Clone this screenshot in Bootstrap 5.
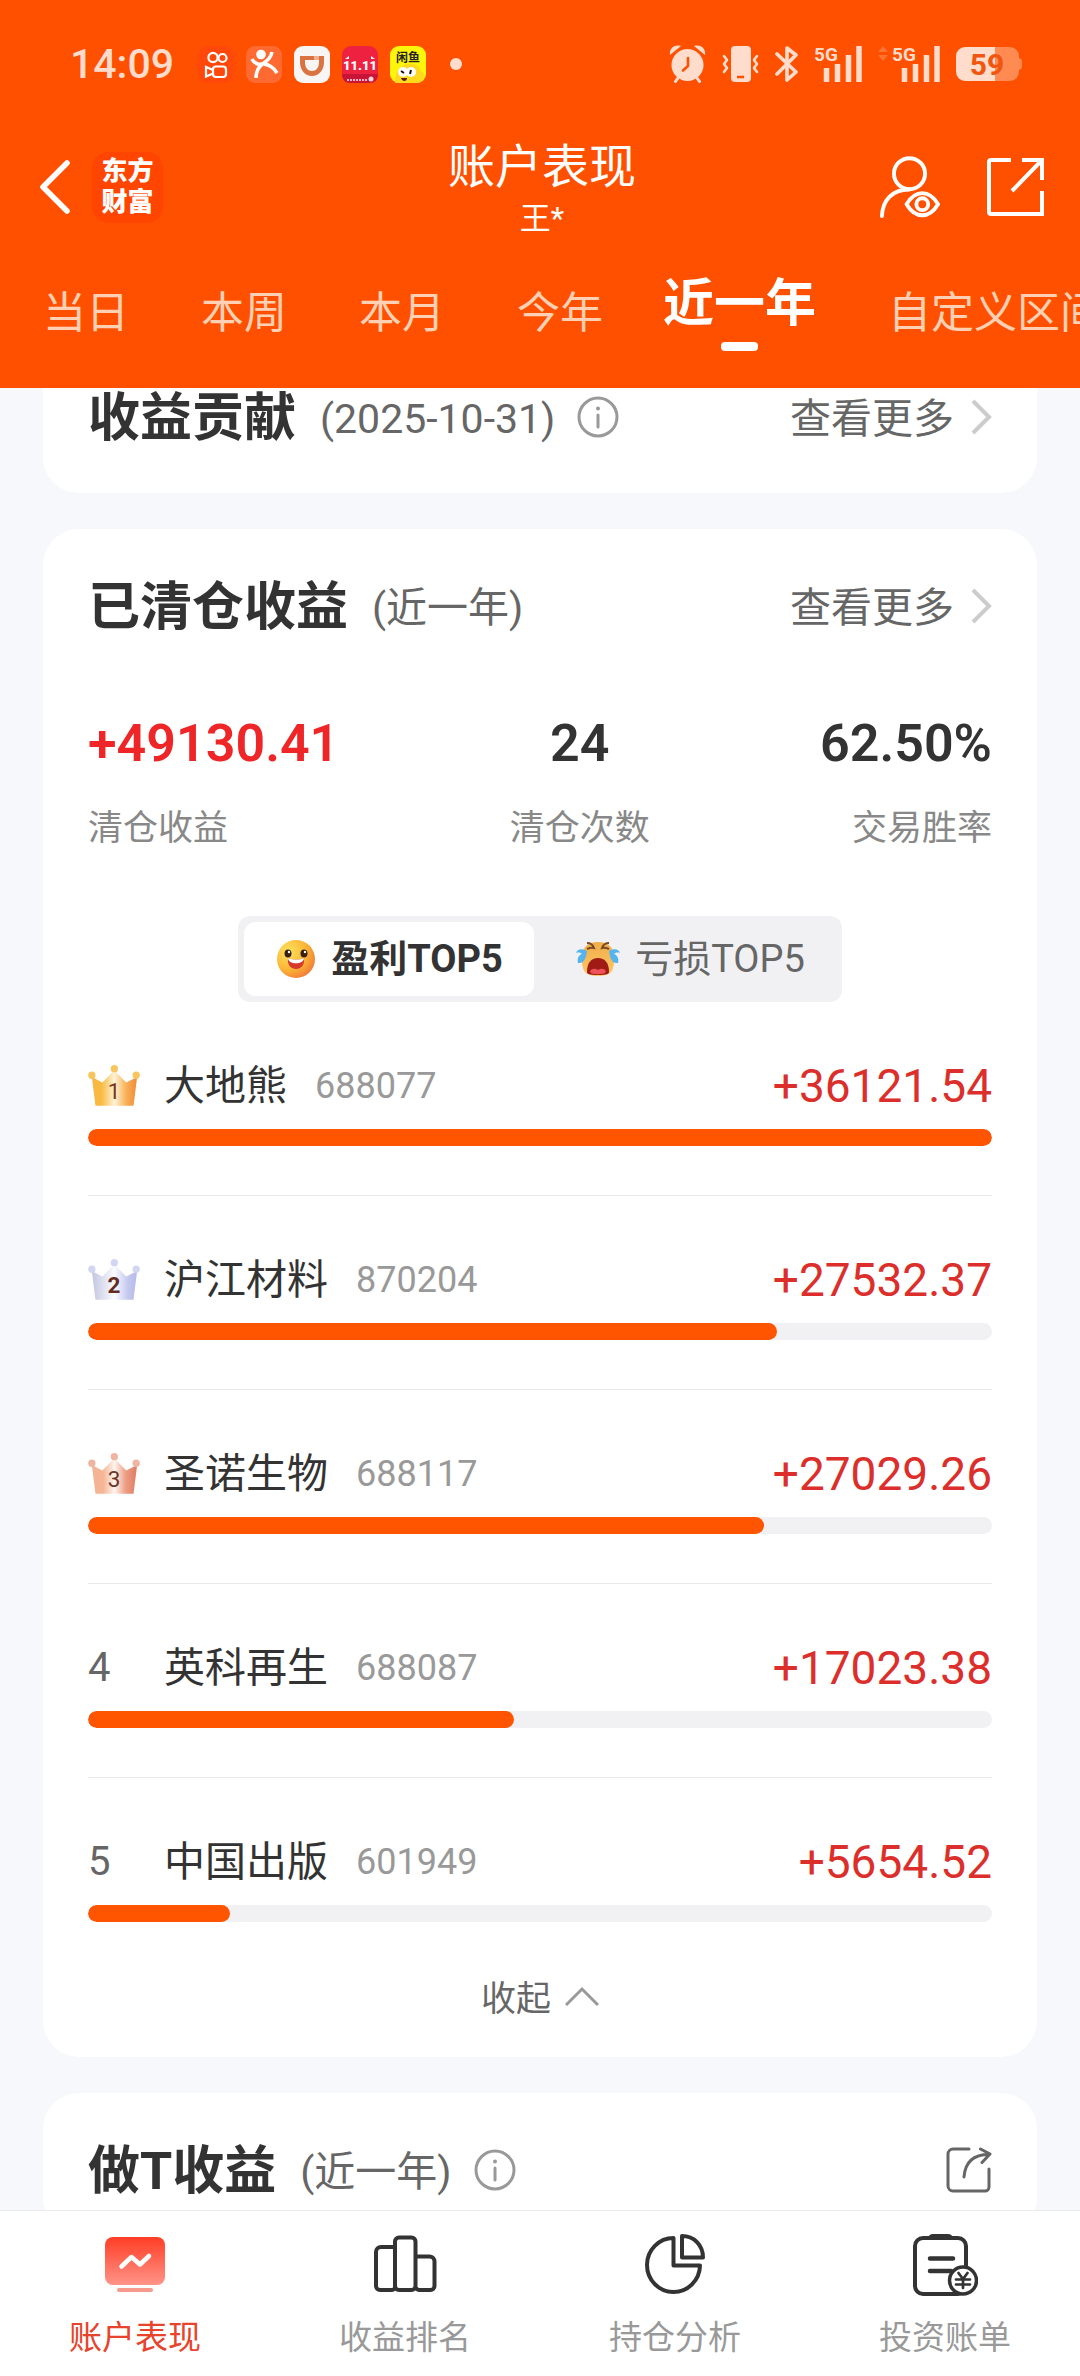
<!DOCTYPE html>
<html lang="zh-CN">
<head>
<meta charset="utf-8">
<meta name="viewport" content="width=device-width, initial-scale=1">
<title>账户表现</title>
<link href="https://cdn.jsdelivr.net/npm/bootstrap@5.3.0/dist/css/bootstrap.min.css" rel="stylesheet">
<style>
  :root { --brand: #ff5000; --pale: #ffdccc; --ink: #333; --rise: #dc2f2c; }
  body { font-family: Roboto, "Noto Sans CJK SC", sans-serif; background: #f7f8fb; color: var(--ink); font-size: 40px; }
  svg { display: block; flex: none; }
  a { color: inherit; text-decoration: none; }
  .btn { --bs-btn-font-size: inherit; --bs-btn-color: inherit; --bs-btn-line-height: inherit; }

  .app-head { background: var(--brand); color: #fff; }
  .status { padding: 42px 58px 0 70px; height: 86px; color: var(--pale); }
  .clock { font-size: 41px; font-weight: 500; line-height: 40px; margin-right: 24px; }
  .apps { gap: 12px; }
  .signals { gap: 16px; }
  .titlebar { margin-top: 52px; padding: 0 36px 0 40px; }
  .side { height: 98px; }
  .brand-box { width: 71px; height: 71px; border-radius: 16px; background: #ff4500; font-size: 26px; line-height: 31px; font-weight: 900; margin-left: 22px; }
  .page-title { font-size: 47px; line-height: 58px; font-weight: 400; }
  .page-sub { font-size: 31px; line-height: 46px; }
  .tools { gap: 46px; }

  .periods { gap: 72px; padding: 33px 0 37px 43px; overflow: hidden; }
  .periods .nav-link { padding: 0; font-size: 43px; line-height: 58px; color: #ffd0b3; white-space: nowrap; }
  .periods .nav-link.active { color: #fff; font-size: 51px; font-weight: 700; margin-left: -12px; }
  .periods .active::after { content: ""; display: block; width: 37px; height: 9px; border-radius: 4px; background: #fff; margin: 9px auto 0; }

  .feed { padding: 0 43px; gap: 36px; min-height: 0; overflow: hidden; }
  .panel { background: #fff; border-radius: 36px; padding: 49px 45px 32px; flex: none; }
  .panel-cut { padding-top: 1px; padding-bottom: 44px; border-top-left-radius: 0; border-top-right-radius: 0; }
  .panel-title { font-size: 52px; line-height: 60px; font-weight: 700; }
  .soft { color: #666; font-size: 41px; line-height: 60px; }
  .period-note { margin-left: 24px; }
  .info { margin-left: 22px; }
  .more { gap: 16px; }
  .info, .more svg, .share-small { margin-bottom: 4px; }

  .figures { margin-top: 76px; }
  .figure-num { font-size: 52px; line-height: 60px; font-weight: 600; }
  .figure-label { font-size: 35px; line-height: 50px; margin-top: 30px; color: #888; }
  .figure-rise { color: #ee2627; }

  .switch { margin: 62px auto 0; padding: 6px; border-radius: 12px; background: #f1f1f4; width: max-content; }
  .switch .btn { height: 74px; width: 290px; border: 0; border-radius: 12px; font-size: 38px; line-height: 60px; padding: 0; color: #666; gap: 14px; }
  .switch .btn + .btn { width: 302px; padding-left: 10px; }
  .switch .btn.active { background: #fff; color: var(--ink); font-weight: 700; }

  .rank-list li { padding: 54px 0 49px; border-bottom: 1px solid #e9e9eb; }
  .rank-list li:last-child { border-bottom: 0; }
  .rank-line { line-height: 60px; }
  .rank-no { width: 76px; color: #666; font-size: 40px; }
  .rank-no svg { margin-bottom: 2px; }
  .rank-name { font-size: 41px; }
  .rank-code { font-size: 36px; color: #999; margin-left: 28px; }
  .rank-gain { font-size: 46px; color: var(--rise); }
  .progress { --bs-progress-height: 17px; --bs-progress-bg: #f1f1f4; --bs-progress-border-radius: 9px; --bs-progress-bar-bg: #ff5500; margin-top: 13px; }
  .progress-bar { border-radius: 9px; }
  .fold { font-size: 35px; line-height: 50px; color: #666; gap: 14px; margin-top: 4px; }
  .fold svg { margin-bottom: 8px; }

  .dock { background: #fff; border-top: 1px solid #e9eaec; padding: 23px 0 18px; }
  .dock a { font-size: 33px; line-height: 40px; color: #999; gap: 22px; }
  .dock a.active { color: #e8432c; }
</style>
</head>
<body class="vh-100 overflow-hidden d-flex flex-column">

<header class="app-head flex-shrink-0">
  <div class="status d-flex align-items-center justify-content-between">
    <div class="d-flex align-items-center">
      <span class="clock">14:09</span>
      <div class="apps d-flex align-items-center">
        <svg width="36" height="37" viewBox="0 0 36 37"><rect width="36" height="37" rx="9" fill="#ff480a"/><g fill="none" stroke="#fff" stroke-width="2.2"><circle cx="15" cy="11.500" r="4.600"/><circle cx="24.500" cy="12" r="4"/><rect x="15" y="20.500" width="13" height="10.500" rx="3"/><path d="M15 24 8 21v9.500l7-3"/></g></svg>
        <svg width="36" height="37" viewBox="0 0 36 37"><rect width="36" height="37" rx="9" fill="#ff6a33"/><circle cx="15" cy="8.500" r="4.800" fill="#fff"/><path d="M6 13c3 6 9 6 12 4s7-6 8-11M18 17c-5 3-8 8-8 15M18 18c7 1 10 4 13 9" fill="none" stroke="#fff" stroke-width="3.600"/></svg>
        <svg width="36" height="37" viewBox="0 0 36 37"><rect width="36" height="37" rx="9" fill="#f8f6f4"/><path d="M6 10h24v6c0 8-5 14-12 14S6 24 6 16zM11 14v2c0 6 3 9 7 9s7-3 7-9v-2z" fill="#db7242" fill-rule="evenodd"/><path d="M20 10h5v4h-5z" fill="#f0b090"/></svg>
        <svg width="36" height="37" viewBox="0 0 36 37"><rect width="36" height="37" rx="9" fill="#ee2140"/><path d="M0 28h36c0 6-3 9-9 9H9c-6 0-9-3-9-9z" fill="#c9143a"/><text x="18" y="24" text-anchor="middle" font-family="Roboto, sans-serif" font-size="13" font-weight="900" fill="#fff">11.11</text><path d="M3 13l4-3v3zM29 10l4 3h-4z" fill="#fff"/><path d="M5 34h20" stroke="#ffb3bf" stroke-width="2" stroke-dasharray="2 1"/><circle cx="29" cy="33" r="2.500" fill="#ffd5dc"/></svg>
        <svg width="36" height="37" viewBox="0 0 36 37"><rect width="36" height="37" rx="9" fill="#fdf50a"/><path d="M5 37c0-15 8-20 17-19l4 1 3 2 2 4 3 3-1 5c-2 3-4 4-7 4z" fill="#ffd91d"/><ellipse cx="13" cy="26" rx="5" ry="5" fill="#fff"/><ellipse cx="21" cy="26" rx="5" ry="5" fill="#fff"/><path d="m11 25 3 2M21 24l-1 4" stroke="#111" stroke-width="2"/><path d="M11 32h6c0 4-5 4-6 0z" fill="#521"/><text x="18" y="16" text-anchor="middle" font-family="'Noto Sans CJK SC', sans-serif" font-size="12" font-weight="700" fill="#222">闲鱼</text></svg>
      </div>
      <svg class="ms-4" width="12" height="12" viewBox="0 0 12 12"><circle cx="6" cy="6" r="6" fill="currentColor"/></svg>
    </div>
    <div class="signals d-flex align-items-center">
      <svg width="37" height="38" viewBox="0 0 37 38"><circle cx="18.500" cy="20" r="16" fill="currentColor"/><path d="M1 10C0 4 5-1 12 1zM36 10C37 4 32-1 25 1z" fill="currentColor"/><path d="m9 33-2.500 3.500M28 33l2.500 3.500" stroke="currentColor" stroke-width="3" stroke-linecap="round"/><path d="M19 13v8l-5 4.500" fill="none" stroke="#ff5000" stroke-width="2.600" stroke-linecap="round"/></svg>
      <svg width="37" height="36" viewBox="0 0 37 36"><rect x="9" width="20" height="36" rx="4" fill="currentColor"/><path d="M15 31h7" stroke="#ff5000" stroke-width="2.500"/><path d="m2 10 3 4-3 4 3 4-3 4M35 10l-3 4 3 4-3 4 3 4" fill="none" stroke="currentColor" stroke-width="2.600" stroke-linecap="round" stroke-linejoin="round"/></svg>
      <svg width="23" height="38" viewBox="0 0 23 38"><path d="m2 9 19 18-9 8V3l9 7L2 29" fill="none" stroke="currentColor" stroke-width="3.600" stroke-linejoin="round" stroke-linecap="round"/></svg>
      <svg width="48" height="48" viewBox="0 -5 48 48"><text x="0" y="15.500" font-family="Roboto, sans-serif" font-size="19" font-weight="700" fill="currentColor">5G</text><path d="M12.500 37V23M23.500 37V19M34.500 37V10M45 37V1" stroke="currentColor" stroke-width="5.500"/></svg>
      <svg width="62" height="48" viewBox="0 -5 62 48"><path d="M5 1l5 6H0zM5 16l5-6H0z" fill="#ff7433"/><text x="14" y="15.500" font-family="Roboto, sans-serif" font-size="19" font-weight="700" fill="currentColor">5G</text><path d="M26.500 37V23M37.500 37V19M48.500 37V10M59 37V1" stroke="currentColor" stroke-width="5.500"/></svg>
      <svg width="66" height="34" viewBox="0 0 66 34"><path d="M39 0h15a9 9 0 0 1 9 9v2c3 1 3 2 3 6s0 5-3 6v2a9 9 0 0 1-9 9H39z" fill="#ff8a52"/><path d="M39 0H9a9 9 0 0 0-9 9v16a9 9 0 0 0 9 9h30z" fill="currentColor"/><text x="31" y="28" text-anchor="middle" font-family="Roboto, sans-serif" font-size="30" font-weight="700" fill="#f0560f">59</text></svg>
    </div>
  </div>

  <div class="titlebar d-flex align-items-start">
    <div class="side d-flex align-items-center col">
      <button type="button" class="btn p-0 border-0" aria-label="返回"><svg width="30" height="54" viewBox="0 0 30 54"><path d="M27 3 3 27l24 24" fill="none" stroke="#fff" stroke-width="5.500" stroke-linecap="round" stroke-linejoin="round"/></svg></button>
      <div class="brand-box d-flex flex-column justify-content-center text-center"><span>东方</span><span>财富</span></div>
    </div>
    <div class="text-center">
      <h1 class="page-title m-0">账户表现</h1>
      <div class="page-sub">王*</div>
    </div>
    <div class="side tools d-flex align-items-center justify-content-end col">
      <button type="button" class="btn p-0 border-0" aria-label="隐藏账户"><svg width="62" height="62" viewBox="0 0 62 63"><g fill="none" stroke="#fff" stroke-width="4"><circle cx="30.500" cy="18" r="15.800"/><path d="M2.500 61C3 45 13 34 30 34" stroke-linecap="round"/><path d="M27.500 49c9-15 23-15 32 0-9 15-23 15-32 0z" stroke-linejoin="round"/><circle cx="43.500" cy="49" r="6"/></g></svg></button>
      <button type="button" class="btn p-0 border-0" aria-label="分享"><svg width="57" height="58" viewBox="0 0 57 58"><path d="M24 2H4a2 2 0 0 0-2 2V54a2 2 0 0 0 2 2h51V33M35 2h20V22M54 3 25 33" fill="none" stroke="#fff" stroke-width="4"/></svg></button>
    </div>
  </div>

  <nav class="periods nav flex-nowrap align-items-center">
    <a class="nav-link" href="#">当日</a>
    <a class="nav-link" href="#">本周</a>
    <a class="nav-link" href="#">本月</a>
    <a class="nav-link" href="#">今年</a>
    <a class="nav-link active" href="#" aria-current="true">近一年</a>
    <a class="nav-link" href="#">自定义区间</a>
  </nav>
</header>

<main class="feed d-flex flex-column flex-grow-1">
  <section class="panel panel-cut">
    <div class="d-flex align-items-center">
      <h2 class="panel-title m-0">收益贡献</h2>
      <span class="soft period-note">(2025-10-31)</span>
      <svg class="info" width="42" height="42" viewBox="0 0 42 42"><g fill="none" stroke="#999" stroke-width="3"><circle cx="21" cy="21" r="19"/><path d="M21 19v12" stroke-linecap="round"/></g><circle cx="21" cy="12.500" r="2" fill="#999"/></svg>
      <a class="soft more d-flex align-items-center ms-auto" href="#">查看更多<svg width="22" height="36" viewBox="0 0 22 36"><path d="m3 2 16 16L3 34" fill="none" stroke="#ccc" stroke-width="4"/></svg></a>
    </div>
  </section>

  <section class="panel">
    <div class="d-flex align-items-center">
      <h2 class="panel-title m-0">已清仓收益</h2>
      <span class="soft period-note">(近一年)</span>
      <a class="soft more d-flex align-items-center ms-auto" href="#">查看更多<svg width="22" height="36" viewBox="0 0 22 36"><path d="m3 2 16 16L3 34" fill="none" stroke="#ccc" stroke-width="4"/></svg></a>
    </div>

    <div class="figures d-flex justify-content-between">
      <div><div class="figure-num figure-rise">+49130.41</div><div class="figure-label">清仓收益</div></div>
      <div class="text-center"><div class="figure-num">24</div><div class="figure-label">清仓次数</div></div>
      <div class="text-end"><div class="figure-num">62.50%</div><div class="figure-label">交易胜率</div></div>
    </div>

    <div class="switch d-flex">
      <button type="button" class="btn active d-flex align-items-center justify-content-center" aria-pressed="true">
        <svg width="42" height="42" viewBox="0 0 42 42"><defs><radialGradient id="face" cx=".3" cy=".3" r=".8"><stop offset="0" stop-color="#ffe25c"/><stop offset=".6" stop-color="#fbb534"/><stop offset="1" stop-color="#f0783a"/></radialGradient></defs><circle cx="21" cy="21" r="19" fill="url(#face)"/><ellipse cx="13" cy="15.500" rx="3.500" ry="4" fill="#3a2012"/><ellipse cx="29" cy="15.500" rx="3.500" ry="4" fill="#3a2012"/><circle cx="14" cy="14" r="1.200" fill="#fff"/><circle cx="30" cy="14" r="1.200" fill="#fff"/><path d="M13 20c5 2 12 2 16 0 1 7-3 11-8 11s-9-4-8-11z" fill="#d8392d"/><path d="M13 20c5 2 12 2 16 0 0 7-16 7-16 0z" fill="#fff"/></svg>
        盈利TOP5
      </button>
      <button type="button" class="btn d-flex align-items-center justify-content-center" aria-pressed="false">
        <svg width="46" height="42" viewBox="0 0 46 42"><defs><linearGradient id="sob" x2="0" y2="1"><stop offset="0" stop-color="#f0ae4a"/><stop offset="1" stop-color="#ffc766"/></linearGradient></defs><path d="M7 20C7 9 13 4 23 4s16 5 16 16-1 18-16 18S7 31 7 20z" fill="url(#sob)"/><path d="M12 34c0-9 4-14 11-14s11 5 11 14c0 2-2 3-11 3s-11-1-11-3z" fill="#a01a16"/><path d="M15 34c1-4 5-4 8-2 3-2 7-2 8 2-2 3-14 3-16 0z" fill="#f0525a"/><path d="M12 5c4 0 6 2 7 5-3-1-5 0-7 1M34 5c-4 0-6 2-7 5 3-1 5 0 7 1" fill="none" stroke="#7a4a25" stroke-width="2"/><path d="M12 13C7 10 2 11 1 15c3-1 5 0 6 1-4 1-5 6-4 9 6 1 8-5 9-12zM34 13c5-3 10-2 11 2-3-1-5 0-6 1 4 1 5 6 4 9-6 1-8-5-9-12z" fill="#55b4ee"/></svg>
        亏损TOP5
      </button>
    </div>

    <svg width="0" height="0" class="position-absolute" aria-hidden="true"><defs>
      <linearGradient id="gold"><stop offset="0" stop-color="#f8b640"/><stop offset=".22" stop-color="#f9bb45"/><stop offset=".5" stop-color="#fff3d6"/><stop offset=".75" stop-color="#f9b25a"/><stop offset="1" stop-color="#f08b36"/></linearGradient>
      <linearGradient id="silver"><stop offset="0" stop-color="#c3c6e0"/><stop offset=".5" stop-color="#fafaff"/><stop offset=".8" stop-color="#c4c8ee"/><stop offset="1" stop-color="#b4baea"/></linearGradient>
      <linearGradient id="bronze"><stop offset="0" stop-color="#f4b393"/><stop offset=".25" stop-color="#f5b596"/><stop offset=".5" stop-color="#fff4ee"/><stop offset=".75" stop-color="#ec9d82"/><stop offset="1" stop-color="#df7c61"/></linearGradient>
      <path id="crown" d="M11 36 22 123h115l11-87-33 17-36-37-36 37z"/>
      <g id="pearls"><circle cx="79" cy="11" r="11"/><circle cx="11" cy="31" r="11"/><circle cx="145" cy="31" r="11"/></g>
    </defs></svg>

    <ol class="rank-list list-unstyled m-0">
      <li>
        <div class="rank-line d-flex align-items-center">
          <span class="rank-no"><svg width="52" height="41" viewBox="0 0 156 124"><use href="#crown" fill="url(#gold)"/><use href="#pearls" fill="#f6c55e"/><text x="78" y="102" text-anchor="middle" font-family="Roboto, sans-serif" font-size="68" fill="#7a3518">1</text></svg></span>
          <span class="rank-name">大地熊</span><span class="rank-code">688077</span><span class="rank-gain ms-auto">+36121.54</span>
        </div>
        <div class="progress"><div class="progress-bar" style="width:100%"></div></div>
      </li>
      <li>
        <div class="rank-line d-flex align-items-center">
          <span class="rank-no"><svg width="52" height="41" viewBox="0 0 156 124"><use href="#crown" fill="url(#silver)"/><use href="#pearls" fill="#d3d6f3"/><text x="78" y="102" text-anchor="middle" font-family="Roboto, sans-serif" font-size="68" font-weight="700" fill="#642b20">2</text></svg></span>
          <span class="rank-name">沪江材料</span><span class="rank-code">870204</span><span class="rank-gain ms-auto">+27532.37</span>
        </div>
        <div class="progress"><div class="progress-bar" style="width:76.2%"></div></div>
      </li>
      <li>
        <div class="rank-line d-flex align-items-center">
          <span class="rank-no"><svg width="52" height="41" viewBox="0 0 156 124"><use href="#crown" fill="url(#bronze)"/><use href="#pearls" fill="#efb5a2"/><text x="78" y="102" text-anchor="middle" font-family="Roboto, sans-serif" font-size="68" fill="#6b3528">3</text></svg></span>
          <span class="rank-name">圣诺生物</span><span class="rank-code">688117</span><span class="rank-gain ms-auto">+27029.26</span>
        </div>
        <div class="progress"><div class="progress-bar" style="width:74.8%"></div></div>
      </li>
      <li>
        <div class="rank-line d-flex align-items-center">
          <span class="rank-no">4</span>
          <span class="rank-name">英科再生</span><span class="rank-code">688087</span><span class="rank-gain ms-auto">+17023.38</span>
        </div>
        <div class="progress"><div class="progress-bar" style="width:47.1%"></div></div>
      </li>
      <li>
        <div class="rank-line d-flex align-items-center">
          <span class="rank-no">5</span>
          <span class="rank-name">中国出版</span><span class="rank-code">601949</span><span class="rank-gain ms-auto">+5654.52</span>
        </div>
        <div class="progress"><div class="progress-bar" style="width:15.7%"></div></div>
      </li>
    </ol>

    <button type="button" class="fold btn p-0 border-0 d-flex align-items-center mx-auto">收起<svg width="34" height="20" viewBox="0 0 34 20"><path d="M1 19 17 3l16 16" fill="none" stroke="#999" stroke-width="3"/></svg></button>
  </section>

  <section class="panel">
    <div class="d-flex align-items-center">
      <h2 class="panel-title m-0">做T收益</h2>
      <span class="soft period-note">(近一年)</span>
      <svg class="info" width="42" height="42" viewBox="0 0 42 42"><g fill="none" stroke="#999" stroke-width="3"><circle cx="21" cy="21" r="19"/><path d="M21 19v12" stroke-linecap="round"/></g><circle cx="21" cy="12.500" r="2" fill="#999"/></svg>
      <button type="button" class="share-small btn p-0 border-0 ms-auto" aria-label="分享"><svg width="46" height="46" viewBox="0 0 46 46"><path d="M23 2H7a5 5 0 0 0-5 5V39a5 5 0 0 0 5 5h32a4 4 0 0 0 4-4V22M18 30C19 16 27 7.500 43 7.500M34.500 2 44 7 36 15.500" fill="none" stroke="#666" stroke-width="3" stroke-linecap="round" stroke-linejoin="round"/></svg></button>
    </div>
  </section>
</main>

<nav class="dock d-flex flex-shrink-0">
  <a class="active col d-flex flex-column align-items-center" href="#" aria-current="page">
    <svg width="66" height="62" viewBox="0 0 66 62"><defs><linearGradient id="glow" x2="0" y2="1"><stop offset="0" stop-color="#ff3d25"/><stop offset="1" stop-color="#ff9488"/></linearGradient></defs><rect x="3" y="3" width="60" height="48" rx="8" fill="url(#glow)"/><rect x="15" y="54" width="36" height="4" rx="2" fill="#f7998c"/><path d="m19.500 32.500 10-9.500 8.500 7.500 9-8.500" fill="none" stroke="#fff" stroke-width="4.500" stroke-linecap="round" stroke-linejoin="round"/></svg>
    账户表现
  </a>
  <a class="col d-flex flex-column align-items-center" href="#">
    <svg width="66" height="62" viewBox="0 0 66 62"><g fill="none" stroke="#333" stroke-width="4"><path d="M23 13H9a5 5 0 0 0-5 5v34a4 4 0 0 0 4 4h12a3 3 0 0 0 3-3"/><rect x="23" y="3.500" width="20.500" height="52.500" rx="4"/><path d="M43.500 22.500h14a5 5 0 0 1 5 5V52a4 4 0 0 1-4 4H47a3 3 0 0 1-3-3"/></g></svg>
    收益排名
  </a>
  <a class="col d-flex flex-column align-items-center" href="#">
    <svg width="66" height="62" viewBox="0 0 66 62"><g fill="none" stroke="#333" stroke-width="4" stroke-linejoin="round"><path d="M31.500 4v27.500H58A26.500 27 0 1 1 31.500 4z"/><path d="M40 2v21.500h21C61 11 52 2 40 2z"/></g></svg>
    持仓分析
  </a>
  <a class="col d-flex flex-column align-items-center" href="#">
    <svg width="66" height="62" viewBox="0 0 66 62"><rect x="3" y="4" width="51" height="56" rx="8" fill="none" stroke="#333" stroke-width="4"/><path d="M16 4q1-4 5-4h15q4 0 5 4z" fill="#333"/><path d="M18 24.500h23M18 37h21" stroke="#333" stroke-width="4.500" stroke-linecap="round"/><circle cx="51" cy="46.500" r="13.500" fill="#fff" stroke="#333" stroke-width="3.500"/><path d="m46.500 39 4.500 6 4.500-6M51 45v9M44 45.500h14M44 50.500h14" fill="none" stroke="#333" stroke-width="2.700" stroke-linecap="round"/></svg>
    投资账单
  </a>
</nav>

<script src="https://cdn.jsdelivr.net/npm/bootstrap@5.3.0/dist/js/bootstrap.bundle.min.js"></script>
</body>
</html>
